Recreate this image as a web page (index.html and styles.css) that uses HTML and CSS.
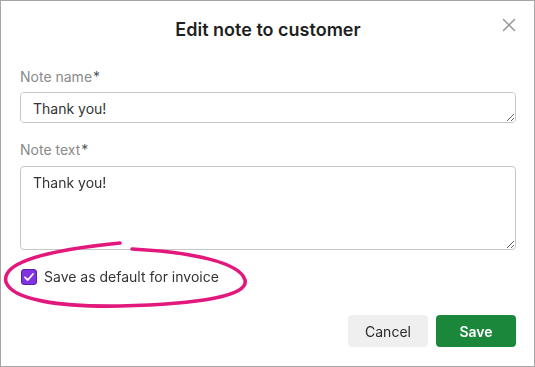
FILE: index.html
```html
<!DOCTYPE html>
<html lang="en">
<head>
<meta charset="utf-8">
<title>Edit note to customer</title>
<link rel="stylesheet" href="styles.css">
</head>
<body>
<div class="dialog">
  <div class="header">
    <h1 class="title">Edit note to customer</h1>
    <button class="close" aria-label="Close">
      <svg width="14" height="14" viewBox="0 0 14 14"><path d="M1.5 1.5 L12.5 12.5 M12.5 1.5 L1.5 12.5" stroke="#9a9a9a" stroke-width="1.6" stroke-linecap="round" fill="none"/></svg>
    </button>
  </div>
  <form class="form">
    <label class="label">Note name<span class="req">*</span></label>
    <textarea class="field field-single" rows="1">Thank you!</textarea>
    <label class="label label-gap">Note text<span class="req">*</span></label>
    <textarea class="field field-multi">Thank you!</textarea>
    <div class="check-row">
      <span class="checkbox">
        <svg width="12" height="12" viewBox="0 0 12 12"><path d="M2 6.3 L4.8 9 L10 3" stroke="#fff" stroke-width="1.8" fill="none" stroke-linecap="round" stroke-linejoin="round"/></svg>
      </span>
      <span class="check-label">Save as default for invoice</span>
    </div>
    <div class="actions">
      <button type="button" class="btn btn-cancel">Cancel</button>
      <button type="button" class="btn btn-save">Save</button>
    </div>
  </form>
  <svg class="scribble" width="535" height="367" viewBox="0 0 535 367">
    <path d="M132 249 C 190 252, 240 262, 245 280 C 249 296, 200 304, 120 306 C 60 307, 12 300, 6 282 C 2 266, 30 252, 120 243" stroke="#e2187c" stroke-width="3.6" fill="none" stroke-linecap="round"/>
  </svg>
</div>
</body>
</html>
```

FILE: styles.css
```css
* { box-sizing: border-box; }
html, body { margin: 0; padding: 0; background: #fff; }
body { font-family: Inter, "Noto Sans", Arial, sans-serif; }

.dialog {
  position: relative;
  width: 535px;
  height: 367px;
  border: 1px solid #a6a6a6;
  padding: 17px 18px 19px 19px;
  display: flex;
  flex-direction: column;
}

.header {
  position: relative;
  height: 24px;
  display: flex;
  justify-content: center;
  align-items: center;
}
.title {
  margin: 0;
  font-size: 18px;
  line-height: 24px;
  font-weight: 600;
  color: #1f1f1f;
}
.close {
  position: absolute;
  right: -3px;
  top: -3px;
  width: 20px;
  height: 20px;
  padding: 0;
  border: 0;
  background: none;
  display: flex;
  align-items: center;
  justify-content: center;
}

.form {
  margin-top: 25px;
  display: flex;
  flex-direction: column;
  flex: 1;
}
.label {
  font-size: 14px;
  line-height: 20px;
  color: #8a8a8a;
  margin-bottom: 5px;
}
.label-gap { margin-top: 17px; margin-bottom: 6px; }
.req { color: #555; margin-left: 1px; }

.field {
  display: block;
  width: 496px;
  border: 1px solid #c6c6c6;
  border-radius: 4px;
  padding: 6px 12px;
  font-family: Inter, "Noto Sans", Arial, sans-serif;
  font-size: 14px;
  line-height: 20px;
  color: #333;
  background: #fff;
  outline: none;
}
.field-single { height: 31px; padding-top: 6px; }
.field-multi { height: 84px; }

.check-row {
  margin-top: 17px;
  display: flex;
  align-items: center;
  height: 20px;
}
.checkbox {
  width: 16px;
  height: 16px;
  margin-left: 1px;
  border-radius: 3px;
  background: #8133e0;
  border: 1px solid #5b1ea8;
  display: flex;
  align-items: center;
  justify-content: center;
}
.check-label {
  margin-left: 7px;
  font-size: 14px;
  line-height: 20px;
  color: #333;
}

.actions {
  margin-top: auto;
  display: flex;
  justify-content: flex-end;
  gap: 8px;
}
.btn {
  width: 80px;
  height: 32px;
  border: 0;
  border-radius: 4px;
  font-family: Inter, "Noto Sans", Arial, sans-serif;
  font-size: 14px;
}
.btn-cancel { background: #efefef; color: #2a2a2a; }
.btn-save { background: #1a873b; color: #fff; font-weight: 600; }

.scribble {
  position: absolute;
  left: -1px;
  top: -1px;
  pointer-events: none;
}
```
